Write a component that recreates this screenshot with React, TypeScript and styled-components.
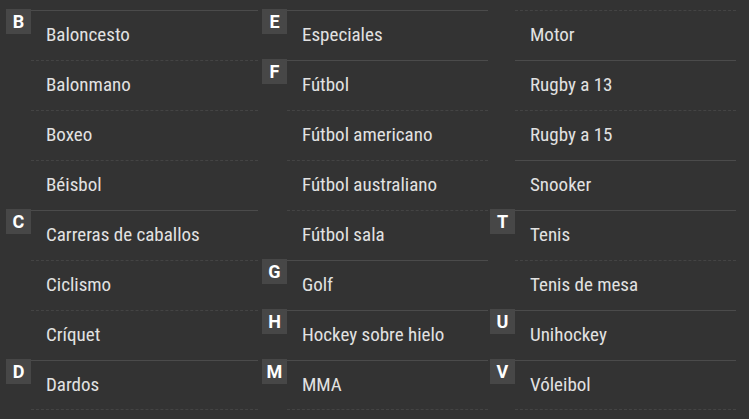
import React from 'react';
import styled, { createGlobalStyle } from 'styled-components';

const GlobalStyle = createGlobalStyle`
  html, body {
    margin: 0;
    padding: 0;
    height: 100%;
    background-color: #333333;
  }
  #root {
    min-height: 100%;
  }
`;

// Sports index: three columns of letter groups
const IndexGrid = styled.div`
  display: grid;
  grid-template-columns: 256px 228px 246px;
  padding: 10px 0 0 6px;
  background-color: #333333;
  min-height: 409px;
`;

const Column = styled.div<{ $gutter: number }>`
  display: flex;
  flex-direction: column;
  padding-right: ${props => props.$gutter}px;
`;

const Group = styled.div`
  display: flex;
  align-items: flex-start;
`;

const Badge = styled.div<{ $hidden: boolean }>`
  width: 25px;
  height: 25px;
  flex-shrink: 0;
  margin-top: -1px;
  display: flex;
  align-items: center;
  justify-content: center;
  background-color: ${props => (props.$hidden ? 'transparent' : '#474747')};
  color: #ffffff;
  font-family: 'Roboto', 'Liberation Sans', sans-serif;
  font-weight: 700;
  font-size: 18px;
`;

const ItemList = styled.ul`
  flex: 1;
  list-style: none;
  margin: 0;
  padding: 0;
`;

const Item = styled.li<{ $first: boolean; $last: boolean }>`
  box-sizing: border-box;
  height: 50px;
  display: flex;
  align-items: center;
  padding: 0 0 2px 15px;
  border-top: 1px ${props => (props.$first ? 'solid #4b4b4b' : 'dashed #444444')};
  border-bottom: ${props => (props.$last ? '1px dashed #444444' : 'none')};
  margin-bottom: ${props => (props.$last ? '-1px' : '0')};
  color: #e2e2e2;
  font-family: 'Roboto Condensed', 'Roboto', 'Liberation Sans Narrow', sans-serif;
  font-size: 19px;
  white-space: nowrap;
`;

interface SportGroup {
  letter: string;
  continued?: boolean;
  items: string[];
}

const columns: { gutter: number; groups: SportGroup[] }[] = [
  {
    gutter: 4,
    groups: [
      { letter: 'B', items: ['Baloncesto', 'Balonmano', 'Boxeo', 'Béisbol'] },
      { letter: 'C', items: ['Carreras de caballos', 'Ciclismo', 'Críquet'] },
      { letter: 'D', items: ['Dardos'] },
    ],
  },
  {
    gutter: 2,
    groups: [
      { letter: 'E', items: ['Especiales'] },
      { letter: 'F', items: ['Fútbol', 'Fútbol americano', 'Fútbol australiano', 'Fútbol sala'] },
      { letter: 'G', items: ['Golf'] },
      { letter: 'H', items: ['Hockey sobre hielo'] },
      { letter: 'M', items: ['MMA'] },
    ],
  },
  {
    gutter: 0,
    groups: [
      { letter: '', continued: true, items: ['Motor'] },
      { letter: '', items: ['Rugby a 13', 'Rugby a 15'] },
      { letter: '', items: ['Snooker'] },
      { letter: 'T', items: ['Tenis', 'Tenis de mesa'] },
      { letter: 'U', items: ['Unihockey'] },
      { letter: 'V', items: ['Vóleibol'] },
    ],
  },
];

const App: React.FC = () => {
  return (
    <>
      <GlobalStyle />
      <IndexGrid>
        {columns.map((col, ci) => (
          <Column key={ci} $gutter={col.gutter}>
            {col.groups.map((group, gi) => (
              <Group key={gi}>
                <Badge $hidden={!group.letter}>{group.letter}</Badge>
                <ItemList>
                  {group.items.map((name, ii) => (
                    <Item
                      key={name}
                      $first={ii === 0 && !group.continued}
                      $last={gi === col.groups.length - 1 && ii === group.items.length - 1}
                    >
                      {name}
                    </Item>
                  ))}
                </ItemList>
              </Group>
            ))}
          </Column>
        ))}
      </IndexGrid>
    </>
  );
};

export default App;
